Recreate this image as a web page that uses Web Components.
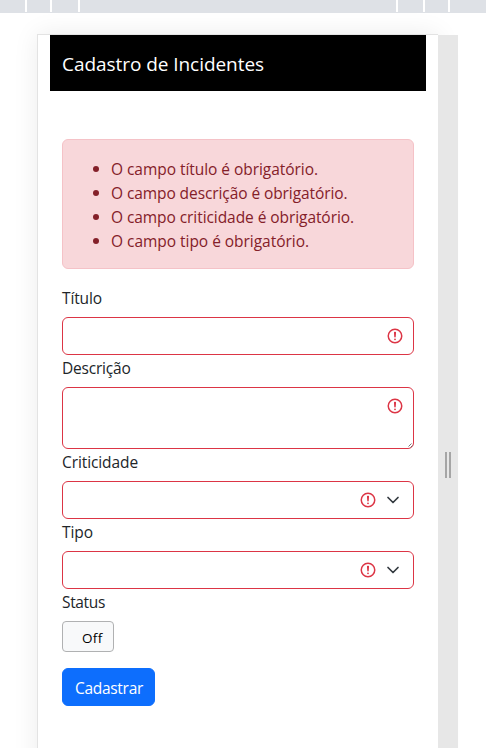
<!DOCTYPE html>
<html lang="pt-BR">
<head>
<meta charset="utf-8">
<title>Cadastro de Incidentes</title>
<style>
html,body{margin:0;height:100%;overflow:hidden;background:#fff}
body{font:15.5px/24px "Open Sans","Noto Sans",sans-serif;color:#212529}
</style>
</head>
<body>
<device-preview>
  <app-navbar><fit-text w="202">Cadastro de Incidentes</fit-text></app-navbar>
  <incident-form></incident-form>
</device-preview>
<script>
const define = (name, html, setup) => customElements.define(name, class extends HTMLElement {
  constructor() {
    super();
    const t = document.createElement('template');
    t.innerHTML = html;
    this.attachShadow({mode: 'open'}).append(t.content.cloneNode(true));
  }
  connectedCallback() { if (setup) setup(this, this.shadowRoot); }
});

define('media-ruler', `<style>
  :host{display:flex;height:13px;background:#dee1e6}
  i{height:12px;border-right:2px solid #fff;box-sizing:border-box}
</style>
<i style="width:27px"></i><i style="width:25px"></i><i style="width:28px"></i><i style="width:318px"></i><i style="width:27px"></i><i style="width:25px"></i>`);

define('resize-handle', `<style>
  :host{display:flex;gap:2px;justify-content:center;width:20px;height:713px;background:#e7e7e7;position:relative}
  i{width:2px;height:26px;margin-top:417px;background:#a5a5a5}
</style><i></i><i></i>`);

define('device-preview', `<style>
  :host{display:block;height:748px;overflow:hidden}
  .stage{display:flex;margin:21px 0 0 37px}
  .screen{box-sizing:border-box;width:401px;height:760px;border:1px solid #e3e3e3;border-width:1px 0 0 1px;background:#fff;padding:0 12px;box-shadow:0 0 24px rgba(0,0,0,.08)}
  resize-handle{margin-top:1px}
  media-ruler{position:relative;z-index:1}
</style>
<media-ruler></media-ruler>
<div class="stage"><div class="screen"><slot></slot></div><resize-handle></resize-handle></div>`);

define('app-navbar', `<style>
  :host{display:flex;align-items:center;height:56px;padding:2px 12px 0;box-sizing:border-box;background:#000;color:#fff;font-size:19px;line-height:30px;--drop:0}
</style><slot></slot>`);

define('error-alert', `<style>
  :host{display:block;box-sizing:border-box;height:130px;padding:16px;border:1px solid #f5c2c7;border-radius:6px;background:#f8d7da;color:#842029}
  ul{margin:0;padding-left:14px;list-style:none}
  li{display:flex;align-items:center;height:24px}
  li::before{content:"";width:6px;height:6px;border-radius:50%;background:#842029;margin:1px 12px 0 0}
</style>
<ul>
<li><fit-text w="207">O campo título é obrigatório.</fit-text></li>
<li><fit-text w="236.5">O campo descrição é obrigatório.</fit-text></li>
<li><fit-text w="243">O campo criticidade é obrigatório.</fit-text></li>
<li><fit-text w="198">O campo tipo é obrigatório.</fit-text></li>
</ul>`);

define('error-icon', `<style>:host{display:block;width:18px;height:18px}svg{display:block}</style>
<svg width="18" height="18" viewBox="0 0 12 12" fill="none" stroke="#dc3545"><circle cx="6" cy="6" r="4.5"/><path stroke-linejoin="round" d="M5.8 3.6h.4L6 6.5z"/><circle cx="6" cy="8.2" r=".6" fill="#dc3545" stroke="none"/></svg>`);

define('form-field', `<style>
  :host{display:block}
  .label{height:24px;margin-bottom:8px}
  .wrap{display:grid}
  .wrap>*{grid-area:1/1}
  .box{display:block;box-sizing:border-box;width:100%;height:38px;margin:0;padding:6px 12px;border:1px solid #dc3545;border-radius:6px;background:#fff;font:inherit;outline:none;appearance:none}
  textarea.box{height:62px;resize:none}
  .icons{display:flex;justify-content:flex-end;align-items:center;gap:8px;height:38px;padding-right:10px;pointer-events:none}
  .icons.sel{padding-right:13px}
  .grip{align-self:end;justify-self:end;margin:0 1px 1px 0}
</style>
<div class="label"><slot></slot></div><div class="wrap"></div>`, (el, root) => {
  const kind = el.getAttribute('kind');
  const control = {input: '<input class="box">', textarea: '<textarea class="box"></textarea>', select: '<select class="box"></select>'}[kind];
  const chevron = '<svg width="16" height="12" viewBox="0 0 16 12" fill="none" stroke="#343a40" stroke-width="1.7" stroke-linecap="round" stroke-linejoin="round"><path d="M3 3.5l5 5 5-5"/></svg>';
  const grip = '<svg class="grip" width="5" height="5" viewBox="0 0 5 5" stroke="#555" stroke-width=".8"><path d="M.5 3.5l3-3M2.5 4.5l2-2"/></svg>';
  root.querySelector('.wrap').innerHTML = control + `<div class="icons ${kind === 'select' ? 'sel' : ''}"><error-icon></error-icon>${kind === 'select' ? chevron : ''}</div>` + (kind === 'textarea' ? grip : '');
});

define('status-toggle', `<style>
  :host{display:block}
  .label{height:24px;margin-bottom:8px}
  button{display:block;box-sizing:border-box;width:52px;height:31px;margin:0;padding:3px 0 0 19px;text-align:left;border:1px solid #b0b1b2;border-radius:4px;background:#f8f9fa;color:#000;font:13.5px/21px "Open Sans",sans-serif;--drop:0}
</style><div class="label"><fit-text w="43">Status</fit-text></div><button><fit-text w="20.5">Off</fit-text></button>`);

define('submit-button', `<style>
  :host{display:block;margin-top:16px}
  button{display:block;box-sizing:border-box;width:93px;height:38px;padding:0 0 0 12px;text-align:left;border:1px solid #0d6efd;border-radius:6px;background:#0d6efd;color:#fff;font:inherit}
</style><button><slot></slot></button>`);

define('incident-form', `<style>
  :host{display:block;padding:48px 12px 0}
  form{margin-top:16px}
</style>
<error-alert></error-alert>
<form>
<form-field kind="input"><fit-text w="40">Título</fit-text></form-field>
<form-field kind="textarea"><fit-text w="68.5">Descrição</fit-text></form-field>
<form-field kind="select"><fit-text w="76">Criticidade</fit-text></form-field>
<form-field kind="select"><fit-text w="31">Tipo</fit-text></form-field>
<status-toggle></status-toggle>
<submit-button><fit-text w="68">Cadastrar</fit-text></submit-button>
</form>`);

// Text whose letter spacing is adjusted to occupy the width given in "w".
// Defined last so that the inherited font is already final when it measures.
define('fit-text', `<style>:host{display:inline-block;white-space:pre}span{display:inline-block;transform:translateY(var(--drop,1px))}</style><span><slot></slot></span>`,
  (el, root) => {
    const s = root.querySelector('span');
    s.style.letterSpacing = '0px';
    const w = s.getBoundingClientRect().width;
    s.style.letterSpacing = (Number(el.getAttribute('w')) - w) / el.textContent.length + 'px';
  });
</script>
</body>
</html>
